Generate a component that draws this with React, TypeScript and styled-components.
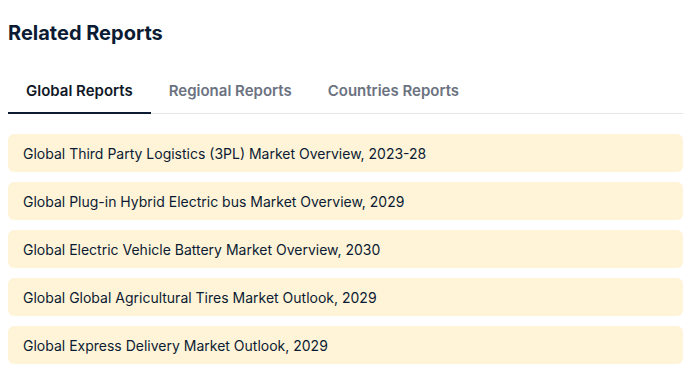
import React, { useState } from 'react';
import styled, { createGlobalStyle } from 'styled-components';

const GlobalStyle = createGlobalStyle`
  body {
    margin: 8px;
    font-family: Inter, "Noto Sans", sans-serif;
    background: #ffffff;
  }
`;

const Section = styled.section`
  width: 675px;
`;

const Title = styled.h2`
  margin: 0;
  padding-top: 12px;
  font-size: 20px;
  line-height: 26px;
  font-weight: 700;
  color: #0b1b33;
`;

const TabBar = styled.div`
  display: flex;
  margin-top: 21px;
  border-bottom: 1px solid #e5e7eb;
`;

const Tab = styled.button<{ $active?: boolean }>`
  border: none;
  background: none;
  margin: 0 0 -1px;
  padding: 1px 18px 0;
  height: 47px;
  font-family: inherit;
  font-size: 15px;
  font-weight: 600;
  color: ${({ $active }) => ($active ? '#111827' : '#6b7280')};
  border-bottom: 2px solid ${({ $active }) => ($active ? '#0b1b33' : 'transparent')};
  cursor: pointer;
`;

const List = styled.ul`
  list-style: none;
  margin: 20px 0 0;
  padding: 0;
  display: flex;
  flex-direction: column;
  gap: 10px;
`;

const Item = styled.li`
  height: 38px;
  display: flex;
  align-items: center;
  padding: 0 15px;
  background: #fff4d8;
  border-radius: 6px;
  font-size: 14px;
  color: #0b1b33;
`;

const tabs = ['Global Reports', 'Regional Reports', 'Countries Reports'];

const reports = [
  'Global Third Party Logistics (3PL) Market Overview, 2023-28',
  'Global Plug-in Hybrid Electric bus Market Overview, 2029',
  'Global Electric Vehicle Battery Market Overview, 2030',
  'Global Global Agricultural Tires Market Outlook, 2029',
  'Global Express Delivery Market Outlook, 2029',
];

export default function App() {
  const [active, setActive] = useState(0);
  return (
    <>
      <GlobalStyle />
      <Section>
        <Title>Related Reports</Title>
        <TabBar>
          {tabs.map((t, i) => (
            <Tab key={t} $active={i === active} onClick={() => setActive(i)}>
              {t}
            </Tab>
          ))}
        </TabBar>
        <List>
          {reports.map((r) => (
            <Item key={r}>{r}</Item>
          ))}
        </List>
      </Section>
    </>
  );
}
